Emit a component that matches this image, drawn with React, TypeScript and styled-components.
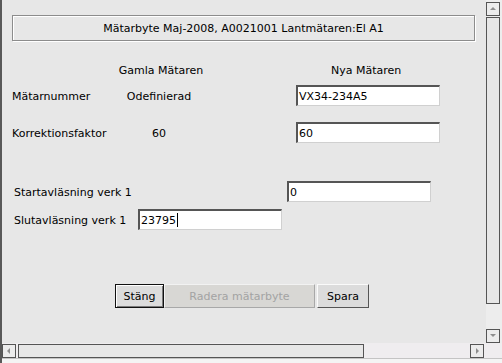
import React from 'react';
import styled, {createGlobalStyle} from 'styled-components';

const GlobalStyle = createGlobalStyle`
  html, body {
    margin: 0;
    padding: 0;
    background: #e7e7e7;
  }
  body {
    font-family: "DejaVu Sans", "Liberation Sans", sans-serif;
    font-size: 11px;
    color: #000;
  }
`

type Dir = 'up' | 'down' | 'left' | 'right'

const arrowPoints: Record<Dir, string> = {
  up: '1,5 4,2 7,5',
  down: '1,2 4,5 7,2',
  left: '5,1 2,4 5,7',
  right: '3,1 6,4 3,7',
}

const Arrow = ({dir}: {dir: Dir}) => (
  <svg width="8" height="8" viewBox="0 0 8 8">
    <polygon points={arrowPoints[dir]} fill="#8e8e8e"/>
  </svg>
)

export default function App() {
  return (
    <>
      <GlobalStyle/>
      <Window>
        <Main>
          <Content>
            <TitleBox>Mätarbyte Maj-2008, A0021001 Lantmätaren:El A1</TitleBox>

            <ColumnHeads>
              <OldHead>Gamla Mätaren</OldHead>
              <NewHead>Nya Mätaren</NewHead>
            </ColumnHeads>

            <CompareRow $top={7}>
              <Label>Mätarnummer</Label>
              <OldValue>Odefinierad</OldValue>
              <Field>VX34-234A5</Field>
            </CompareRow>

            <CompareRow $top={16}>
              <Label>Korrektionsfaktor</Label>
              <OldValue>60</OldValue>
              <Field>60</Field>
            </CompareRow>

            <ReadingRow $top={38} $labelWidth={273}>
              <Label>Startavläsning verk 1</Label>
              <Field>0</Field>
            </ReadingRow>

            <ReadingRow $top={7} $labelWidth={124}>
              <Label>Slutavläsning verk 1</Label>
              <Field>23795<Caret/></Field>
            </ReadingRow>

            <ButtonBar>
              <Button $variant="default" $width={49}>Stäng</Button>
              <Button $variant="disabled" $width={151} disabled>Radera mätarbyte</Button>
              <Button $variant="normal" $width={52}>Spara</Button>
            </ButtonBar>
          </Content>

          <VScroll>
            <ScrollButton><Arrow dir="up"/></ScrollButton>
            <VThumb/>
            <VTrack/>
            <ScrollButton><Arrow dir="down"/></ScrollButton>
          </VScroll>
        </Main>

        <HScroll>
          <ScrollButton><Arrow dir="left"/></ScrollButton>
          <HThumb/>
          <HTrack/>
          <ScrollButton><Arrow dir="right"/></ScrollButton>
        </HScroll>
        <Footer/>
      </Window>
    </>
  );
}

const Window = styled.div`
  width: 502px;
  height: 363px;
  box-sizing: border-box;
  border-left: 2px solid #595959;
  display: flex;
  flex-direction: column;
  background: #e7e7e7;
  overflow: hidden;
`
const Main = styled.div`
  display: flex;
  height: 343px;
`
const Content = styled.div`
  flex: 1;
  display: flex;
  flex-direction: column;
  padding-top: 15px;
`
const TitleBox = styled.div`
  margin-left: 10px;
  width: 463px;
  height: 26px;
  box-sizing: border-box;
  border: 1px solid #8c8c8c;
  box-shadow: inset 1px 1px 0 #fff, 1px 1px 0 #fff;
  display: flex;
  align-items: center;
  justify-content: center;
`
const ColumnHeads = styled.div`
  display: flex;
  height: 16px;
  align-items: center;
  margin-top: 21px;
  padding-left: 113px;
`
const OldHead = styled.div`
  width: 92px;
  text-align: center;
`
const NewHead = styled.div`
  margin-left: 124px;
`
const CompareRow = styled.div<{$top: number}>`
  display: grid;
  grid-template-columns: 103px 88px 93px 144px;
  align-items: center;
  height: 21px;
  margin-top: ${p => p.$top}px;
  padding-left: 10px;

  & > :last-child {
    grid-column: 4;
  }
`
const ReadingRow = styled.div<{$top: number, $labelWidth: number}>`
  display: grid;
  grid-template-columns: ${p => p.$labelWidth}px 144px;
  align-items: center;
  height: 21px;
  margin-top: ${p => p.$top}px;
  padding-left: 12px;
`
const Label = styled.div`
  white-space: nowrap;
  padding-top: 2px;
`
const OldValue = styled.div`
  text-align: center;
  padding-top: 2px;
`
const Field = styled.div`
  height: 21px;
  box-sizing: border-box;
  background: #fff;
  border-top: 2px solid #555;
  border-left: 2px solid #555;
  border-right: 1px solid #d0d0d0;
  border-bottom: 1px solid #d0d0d0;
  padding: 0 2px 0 1px;
  display: flex;
  align-items: center;
  white-space: nowrap;
`
const Caret = styled.span`
  display: inline-block;
  width: 1px;
  height: 14px;
  background: #000;
  margin-left: 1px;
`
const ButtonBar = styled.div`
  display: flex;
  margin-top: 54px;
  padding-left: 113px;
  height: 24px;
`
const Button = styled.button<{$variant: 'default' | 'normal' | 'disabled', $width: number}>`
  width: ${p => p.$width}px;
  height: 24px;
  box-sizing: border-box;
  font-family: inherit;
  font-size: 11px;
  padding: 0;
  margin: 0;
  margin-left: ${p => p.$variant === 'normal' ? 2 : 0}px;
  cursor: default;
  background: ${p => p.$variant === 'disabled' ? '#d8d7d4' : '#dcdcdc'};
  color: ${p => p.$variant === 'disabled' ? '#a3a3a3' : '#000'};
  border: ${p => p.$variant === 'default' ? '1px solid #111' : '1px solid'};
  border-color: ${p =>
    p.$variant === 'default' ? '#111' :
    p.$variant === 'disabled' ? '#f2f2f2 #a8a8a8 #a8a8a8 #f2f2f2' :
    '#fafafa #555 #555 #fafafa'};
  box-shadow: ${p => p.$variant === 'default'
    ? 'inset 1px 1px 0 #fff, inset -1px -1px 0 #7a7a7a'
    : 'none'};
`
const VScroll = styled.div`
  width: 16px;
  display: flex;
  flex-direction: column;
  padding: 2px 0 0 0;
  box-sizing: border-box;
  background: #ededed;
`
const ScrollButton = styled.div`
  width: 14px;
  height: 14px;
  box-sizing: border-box;
  border: 1px solid #555;
  background: #ececec;
  display: flex;
  align-items: center;
  justify-content: center;
  flex: none;
`
const VThumb = styled.div`
  width: 14px;
  height: 287px;
  margin-top: 1px;
  box-sizing: border-box;
  border: 1px solid #555;
  background: #e7e7e7;
`
const VTrack = styled.div`
  flex: 1;
`
const HScroll = styled.div`
  height: 15px;
  display: flex;
  align-items: center;
  padding-right: 18px;
  background: #efedef;
`
const HThumb = styled.div`
  width: 346px;
  height: 14px;
  margin-left: 2px;
  box-sizing: border-box;
  border: 1px solid #555;
  background: #e7e7e7;
`
const HTrack = styled.div`
  flex: 1;
`
const Footer = styled.div`
  flex: 1;
  border-top: 1px solid #c4c4c4;
  background: #f4f4f4;
`
